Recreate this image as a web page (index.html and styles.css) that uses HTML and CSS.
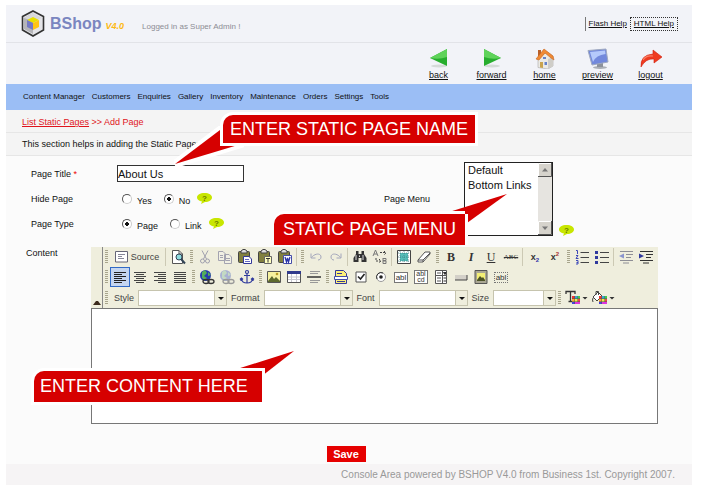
FILE: index.html
```html
<!DOCTYPE html>
<html lang="en">
<head>
<meta charset="utf-8">
<title>BShop - Add Page</title>
<link rel="stylesheet" href="styles.css">
</head>
<body>
<div class="page">
  <header class="masthead">
    <div class="brand">
      <svg class="logo" width="24" height="27" viewBox="0 0 24 27">
        <path d="M12 1 22.500 6.500V20L12 26 1.500 20V6.500Z" fill="#e4e4e8" stroke="#333" stroke-width="1.600"/>
        <path d="M12 3 3 8v11l9 5Z" fill="#b5b5b9"/><path d="M12 3 21 8 12 11 3 8Z" fill="#d8d8dc"/>
        <path d="M12 7 18 10 12 13 6 10Z" fill="#e8e000"/><path d="M6 10 12 13V20L6 17Z" fill="#7479c4"/><path d="M12 13 18 10V17L12 20Z" fill="#ffc414"/>
      </svg>
      <span class="brand-name">BShop</span>
      <span class="version">V4.0</span>
      <span class="login">Logged in as Super Admin !</span>
    </div>
    <div class="help-links"><a href="#">Flash Help</a><a class="focused" href="#">HTML Help</a></div>
  </header>

  <div class="actions">
    <a href="#"><svg width="24" height="22" viewBox="0 0 24 22"><ellipse cx="12" cy="19" rx="8" ry="1.500" fill="#d5dad8"/><path d="M20 2V19L3 11Z" fill="#27ad2e"/><path d="M20 2V10Q12 13 3 11Z" fill="#5fd35a"/></svg>back</a>
    <a href="#"><svg width="24" height="22" viewBox="0 0 24 22"><ellipse cx="12" cy="19" rx="8" ry="1.500" fill="#d5dad8"/><path d="M4 2V19L21 11Z" fill="#27ad2e"/><path d="M4 2V10Q12 13 21 11Z" fill="#5fd35a"/></svg>forward</a>
    <a href="#"><svg width="24" height="22" viewBox="0 0 24 22"><path d="M5 11V20.500L15 22 20 19V9L14 5Z" fill="#eceae4" stroke="#aaa" stroke-width=".6"/><path d="M15 12V22L20 19V10Z" fill="#cfcdc8"/><path d="M5 3H8V8L5 10Z" fill="#b9602a"/><path d="M3 12 11 2 20 9 21 13 18 11 12 6 6 13Z" fill="#f08a35" stroke="#c8641c" stroke-width=".6"/><path d="M7 15H10V21L7 20.500Z" fill="#c9a34e"/><path d="M11.500 15H14V18H11.500ZM10 10H13V12H10Z" fill="#6682c9"/></svg>home</a>
    <a href="#"><svg width="24" height="22" viewBox="0 0 24 22"><ellipse cx="14" cy="20.500" rx="7" ry="1.500" fill="#aaaeb5"/><path d="M11 16H17V20H11Z" fill="#8c919b"/><path d="M2 3.500 20 2 22 15 6 18Z" fill="#7288dc" stroke="#9fa9c0"/><path d="M4 5 19 3.500 19.500 7Q10 8 7 15Z" fill="#b5c9fb"/></svg>preview</a>
    <a href="#"><svg width="24" height="22" viewBox="0 0 24 22"><path d="M2 20Q1 8 14 7V3L23 10 15 16V12Q7 11 2 20Z" fill="#ef3b20" stroke="#cd200f" stroke-width=".6"/><path d="M4 13Q7 8 14 9" fill="none" stroke="#fa8067" stroke-width="1.200"/></svg>logout</a>
  </div>

  <nav class="menu">
    <a href="#">Content Manager</a><a href="#">Customers</a><a href="#">Enquiries</a><a href="#">Gallery</a><a href="#">Inventory</a><a href="#">Maintenance</a><a href="#">Orders</a><a href="#">Settings</a><a href="#">Tools</a>
  </nav>

  <div class="crumbs"><a href="#">List Static Pages</a> &gt;&gt; Add Page</div>
  <div class="intro">This section helps in adding the Static Pages
    <div class="callout callout-name">
      <svg class="tail" width="70" height="40" viewBox="0 0 70 40"><path d="M1 38 46 4 64 19Z" fill="#d60000" stroke="#fff" stroke-width="8" paint-order="stroke"/></svg>
      <span class="callout-text">ENTER STATIC PAGE NAME</span>
    </div>
  </div>

  <form class="form">
    <div class="fields">
      <label class="name" for="title">Page Title <span class="req">*</span></label>
      <div class="value"><input class="title-input" id="title" type="text" value="About Us"></div>

      <span class="name row2">Hide Page</span>
      <div class="value row2">
        <label><input type="radio" name="hide"> <span>Yes</span></label>
        <label><input type="radio" name="hide" checked> <span>No</span></label>
        <svg class="hint" width="15" height="11" viewBox="0 0 15 11"><path d="M7.500 0C12 0 15 2 15 4.500S12 9 8 9L4 11 5 8.500C2 8 0 6.500 0 4.500 0 2 3 0 7.500 0Z" fill="#c8e600"/><text x="5" y="8" class="hint-mark">?</text></svg>
      </div>

      <span class="name row3">Page Type</span>
      <div class="value row3">
        <label><input type="radio" name="type" checked> <span>Page</span></label>
        <label><input type="radio" name="type"> <span>Link</span></label>
        <svg class="hint" width="15" height="11" viewBox="0 0 15 11"><path d="M7.500 0C12 0 15 2 15 4.500S12 9 8 9L4 11 5 8.500C2 8 0 6.500 0 4.500 0 2 3 0 7.500 0Z" fill="#c8e600"/><text x="5" y="8" class="hint-mark">?</text></svg>
      </div>

      <label class="menu-name" for="pagemenu">Page Menu</label>
      <div class="menu-value">
        <div class="listbox">
          <select id="pagemenu" size="4"><option>Default</option><option>Bottom Links</option></select>
          <div class="scrollbar">
            <svg width="14" height="14" viewBox="0 0 14 14"><path d="M.5 13.500V.5H13.500" fill="none" stroke="#fff"/><path d="M13.500 0V13.500H0" fill="none" stroke="#555"/><path d="M4 8.500 7 5 10 8.500Z" fill="#777"/></svg>
            <svg width="14" height="14" viewBox="0 0 14 14"><path d="M.5 13.500V.5H13.500" fill="none" stroke="#fff"/><path d="M13.500 0V13.500H0" fill="none" stroke="#555"/><path d="M4 5.500 7 9 10 5.500Z" fill="#777"/></svg>
          </div>
        </div>
        <svg class="hint" width="15" height="11" viewBox="0 0 15 11"><path d="M7.500 0C12 0 15 2 15 4.500S12 9 8 9L4 11 5 8.500C2 8 0 6.500 0 4.500 0 2 3 0 7.500 0Z" fill="#c8e600"/><text x="5" y="8" class="hint-mark">?</text></svg>
        <div class="callout callout-menu">
          <svg class="tail" width="64" height="34" viewBox="0 0 64 34"><path d="M60 3 2 21 20 32Z" fill="#d60000"/></svg>
          <span class="callout-text">STATIC PAGE MENU</span>
        </div>
      </div>
    </div>

    <div class="content-row">
      <label class="content-name" for="body">Content</label>
      <div class="editor">
        <div class="toolbar">
          <button type="button" class="collapse" aria-label="Collapse toolbar"><svg width="8" height="4" viewBox="0 0 8 4"><path d="M0 4 3 0H5L8 4Z" fill="#3c2a1c"/></svg></button>
          <div class="tool-rows">
            <div class="tools">
              <i class="grip"></i>
              <button type="button" class="source"><svg width="13" height="12" viewBox="0 0 13 12"><path d="M.5.5H12.500V11H.5Z" fill="#fff" stroke="#667"/><path d="M3 3.500H10M3 5.500H7M3 7.500H9" stroke="#889"/></svg>Source</button>
              <i class="sep"></i>
              <button type="button" aria-label="Preview"><svg viewBox="0 0 16 16"><path d="M2.500 1.500H9L12.500 5V14.500H2.500Z" fill="#fff" stroke="#555"/><path d="M9 1.500V5H12.500" fill="none" stroke="#555"/><circle cx="9" cy="8" r="3" fill="#8fdce0" stroke="#345"/><path d="M11 10 15 14.500" stroke="#345" stroke-width="2"/></svg></button>
              <i class="grip"></i>
              <button type="button" aria-label="Cut"><svg viewBox="0 0 16 16" fill="none" stroke="#a0a0ae"><path d="M5 1.500 9.500 10M11 1.500 6.500 10"/><circle cx="5.500" cy="12" r="2"/><circle cx="10.500" cy="12" r="2"/></svg></button>
              <button type="button" aria-label="Copy"><svg viewBox="0 0 16 16" fill="#f1f0e4" stroke="#a3a3b0"><path d="M1.500 2.500H6L8.500 5V11.500H1.500ZM7.500 5.500H12L14.500 8V14.500H7.500ZM9 9.500H13M9 11.500H13M3 6.500H6M3 8.500H6"/></svg></button>
              <button type="button" aria-label="Paste"><svg viewBox="0 0 16 16"><rect x="1.500" y="2.500" width="11" height="11" rx="1" fill="#81803f" stroke="#444"/><path d="M4 4V2L6 .5H8L10 2V4Z" fill="#ddd" stroke="#444"/><path d="M6.500 7.500H12L14.500 10V14.500H6.500Z" fill="#fff" stroke="#33389b"/><path d="M8 10.500H12M8 12.500H13" stroke="#6268c4"/></svg></button>
              <button type="button" aria-label="Paste as text"><svg viewBox="0 0 16 16"><rect x="1.500" y="2.500" width="11" height="11" rx="1" fill="#81803f" stroke="#444"/><path d="M4 4V2L6 .5H8L10 2V4Z" fill="#ddd" stroke="#444"/><path d="M7.500 7.500H14.500V14.500H7.500Z" fill="#ffffbf" stroke="#666"/><path d="M9 9.500H13M11 9V13.500" stroke="#333"/></svg></button>
              <button type="button" aria-label="Paste from Word"><svg viewBox="0 0 16 16"><rect x="1.500" y="2.500" width="11" height="11" rx="1" fill="#81803f" stroke="#444"/><path d="M4 4V2L6 .5H8L10 2V4Z" fill="#ddd" stroke="#444"/><path d="M6.500 6.500H14.500V14.500H6.500Z" fill="#fff" stroke="#444da8"/><path d="M8 8 9.500 13 10.500 9 11.500 13 13 8" fill="none" stroke="#2b35a8" stroke-width="1.300"/></svg></button>
              <i class="sep"></i><i class="grip"></i>
              <button type="button" aria-label="Undo"><svg viewBox="0 0 16 16" fill="none" stroke="#a3a6bb"><path d="M3 4.500V9H7.500M3.500 8.500C7 4 13 4 13 8 13 10 11.500 11 10 11"/></svg></button>
              <button type="button" aria-label="Redo"><svg viewBox="0 0 16 16" fill="none" stroke="#a3a6bb"><path d="M13 4.500V9H8.500M12.500 8.500C9 4 3 4 3 8 3 10 4.500 11 6 11"/></svg></button>
              <i class="sep"></i>
              <button type="button" aria-label="Find"><svg viewBox="0 0 16 16" fill="#333"><path d="M4 2H6.500V5H9.500V2H12V5L14.500 9V13H9.500V9H6.500V13H1.500V9L4 5Z"/><path d="M4 6V11M11 6V11M7.500 6.500V8" stroke="#ddd"/></svg></button>
              <button type="button" aria-label="Replace"><svg viewBox="0 0 16 16" fill="none" stroke="#777"><path d="M1 7 3.500 1 6 7M2 5H5M11 9V14.500M11 9.500H14V11.500H11M11 12H14V14.500H11"/><path d="M8 3.500H13M12 2 14 4 12 6M4 9V12H8M7 10 9 12 7 14" stroke="#444" stroke-dasharray="2 1"/></svg></button>
              <i class="sep"></i>
              <button type="button" aria-label="Select all"><svg viewBox="0 0 16 16"><path d="M1.500 1.500H14.500V14.500H1.500Z" fill="#fff" stroke="#444"/><path d="M4 4H12V12H4Z" fill="#55bdb8"/><path d="M4 2V14M8 2V14M12 2V14M2 4H14M2 8H14M2 12H14" stroke="#387b80" stroke-width=".7" stroke-dasharray="1 1"/></svg></button>
              <button type="button" aria-label="Remove format"><svg viewBox="0 0 16 16"><path d="M2 11 9 3H14V5L7 13H2Z" fill="#fff" stroke="#555"/><path d="M2 11H7L14 4M7 11V13" fill="none" stroke="#555"/></svg></button>
              <i class="grip"></i>
              <button type="button" class="glyph bold">B</button>
              <button type="button" class="glyph italic">I</button>
              <button type="button" class="glyph under">U</button>
              <button type="button" class="glyph strike">ABC</button>
              <i class="sep"></i>
              <button type="button" class="glyph script">x<sub>2</sub></button>
              <button type="button" class="glyph script">x<sup>2</sup></button>
              <i class="grip"></i>
              <button type="button" aria-label="Numbered list"><svg viewBox="0 0 16 16" fill="none"><path d="M6.500 3.500H15M6.500 8.500H15M6.500 13.500H15" stroke="#444"/><path d="M2 1.500H3.500V5M2 6.500H4L2 9.500H4.500M2 11.500H4V15H2M2.500 13.500H4" stroke="#3d48b8"/></svg></button>
              <button type="button" aria-label="Bulleted list"><svg viewBox="0 0 16 16"><path d="M6 3.500H15M6 8.500H15M6 13.500H15" stroke="#444"/><path d="M1 2H4V5H1ZM1 7H4V10H1ZM1 12H4V15H1Z" fill="#303a9d"/></svg></button>
              <i class="sep"></i>
              <button type="button" aria-label="Outdent"><svg viewBox="0 0 16 16"><path d="M2 2.500H15M8 5.500H15M8 8.500H13M2 11.500H15M5 14H11" stroke="#8e8e95"/><path d="M6 4.500V9.500L1 7Z" fill="#8b95ce"/></svg></button>
              <button type="button" aria-label="Indent"><svg viewBox="0 0 16 16"><path d="M2 2.500H15M8 5.500H15M8 8.500H13M2 11.500H15M5 14H11" stroke="#333"/><path d="M1 4.500V9.500L6 7Z" fill="#303a9d"/></svg></button>
            </div>
            <div class="tools">
              <i class="grip"></i>
              <button type="button" class="pressed" aria-label="Align left"><svg viewBox="0 0 16 16"><path d="M2 3.500H14M2 5.500H10M2 7.500H14M2 9.500H10M2 11.500H14M2 13.500H10" stroke="#222"/></svg></button>
              <button type="button" aria-label="Align center"><svg viewBox="0 0 16 16"><path d="M2 3.500H14M4 5.500H12M2 7.500H14M4 9.500H12M2 11.500H14M4 13.500H12" stroke="#444"/></svg></button>
              <button type="button" aria-label="Align right"><svg viewBox="0 0 16 16"><path d="M2 3.500H14M6 5.500H14M2 7.500H14M6 9.500H14M2 11.500H14M6 13.500H14" stroke="#444"/></svg></button>
              <button type="button" aria-label="Justify"><svg viewBox="0 0 16 16"><path d="M2 3.500H14M2 5.500H14M2 7.500H14M2 9.500H14M2 11.500H14M2 13.500H14" stroke="#444"/></svg></button>
              <i class="grip"></i>
              <button type="button" aria-label="Link"><svg viewBox="0 0 16 16"><circle cx="6.500" cy="6.500" r="5.500" fill="#263cae"/><path d="M3 3 6 1 8 4 5 7 8 9 6 11 3 9ZM9 3 12 6 9 7Z" fill="#54ad5a"/><g fill="none" stroke="#333" stroke-width="1.300"><ellipse cx="7" cy="12.500" rx="3" ry="2"/><ellipse cx="12" cy="12.500" rx="3" ry="2"/></g></svg></button>
              <button type="button" aria-label="Unlink"><svg viewBox="0 0 16 16"><circle cx="6.500" cy="6.500" r="5.500" fill="#a9b1d2"/><path d="M3 3 6 1 8 4 5 7 8 9 6 11 3 9ZM9 3 12 6 9 7Z" fill="#c3d9c3"/><g fill="none" stroke="#999" stroke-width="1.300"><ellipse cx="7" cy="12.500" rx="3" ry="2"/><ellipse cx="12" cy="12.500" rx="3" ry="2"/></g></svg></button>
              <button type="button" aria-label="Anchor"><svg viewBox="0 0 16 16" fill="none" stroke="#303a9d" stroke-width="1.200"><circle cx="8" cy="3" r="1.500"/><path d="M8 4.500V14M5 6.500H11M2 12V9M1 10.500 2.500 9 4 10.500M14 12V9M12 10.500 13.500 9 15 10.500M2.500 10C3 13 6 14 8 14S13 13 13.500 10"/></svg></button>
              <i class="grip"></i>
              <button type="button" aria-label="Image"><svg viewBox="0 0 16 16"><path d="M1.500 2.500H14.500V13.500H1.500Z" fill="#f5f19f" stroke="#555"/><path d="M2 12 6 7 8 10 10 8 14 12V13H2Z" fill="#5d6a2e"/><circle cx="11" cy="5" r="1.300" fill="#b79a20"/></svg></button>
              <button type="button" aria-label="Table"><svg viewBox="0 0 16 16"><path d="M1.500 2.500H14.500V13.500H1.500Z" fill="#fff" stroke="#555"/><path d="M1 2H15V5H1Z" fill="#303a8d"/><path d="M5.500 5V13M10.500 5V13M2 8H14M2 10.500H14" stroke="#c8c8d0"/></svg></button>
              <button type="button" aria-label="Rule"><svg viewBox="0 0 16 16"><path d="M4 2.500H14M4 4.500H12M4 11.500H14M4 13.500H12" stroke="#999"/><path d="M1 8H15" stroke="#333" stroke-width="1.500"/></svg></button>
              <i class="grip"></i>
              <button type="button" aria-label="Form"><svg viewBox="0 0 16 16"><path d="M2.500 1.500H10.500L13.500 4.500V14.500H2.500Z" fill="#fdf07a" stroke="#33389b"/><path d="M4 4H9V5H4ZM4 12H12V13H4Z" fill="#33389b"/><path d="M1.500 7.500H14.500V10.500H1.500Z" fill="#fff" stroke="#444da8"/></svg></button>
              <button type="button" aria-label="Checkbox"><svg viewBox="0 0 16 16"><path d="M3 3H13V13H3Z" fill="#fff" stroke="#555"/><path d="M5 7.500 7.500 10 11.500 5" fill="none" stroke="#222" stroke-width="1.600"/></svg></button>
              <button type="button" aria-label="Radio"><svg viewBox="0 0 16 16"><circle cx="8" cy="8" r="4.500" fill="#fff" stroke="#999"/><path d="M4 10A4.500 4.500 0 0 1 10 4" fill="none" stroke="#333"/><circle cx="8" cy="8" r="1.800" fill="#222"/></svg></button>
              <button type="button" class="glyph"><span class="field-icon">abl</span></button>
              <button type="button" class="glyph"><span class="field-icon area">abl<br>cd</span></button>
              <button type="button" aria-label="Selection field"><svg viewBox="0 0 16 16"><path d="M2.500 1.500H13.500V6.500H2.500ZM2.500 6.500H13.500V14.500H2.500Z" fill="#fff" stroke="#555"/><path d="M9.500 2V14M4 4H8M4 9H8M4 12H8" stroke="#555"/><path d="M10.500 3.500H13L12 5.500ZM10.500 9H13M10.500 12H13" stroke="#333"/></svg></button>
              <button type="button" aria-label="Button"><svg viewBox="0 0 16 16"><path d="M2 6H14V11H2Z" fill="#d3d0c8"/><path d="M2 11H14V6" fill="none" stroke="#444"/></svg></button>
              <button type="button" aria-label="Image button"><svg viewBox="0 0 16 16"><path d="M2 1.500H14V14.500H2Z" fill="#aaa793" stroke="#555"/><path d="M4 4H12V12H4Z" fill="#f3ef75"/><path d="M4 11 7 7 9 9 10 8 12 11V12H4Z" fill="#4c5325"/></svg></button>
              <button type="button" class="glyph"><span class="field-icon hidden-field">abl</span></button>
            </div>
            <div class="tools combos">
              <i class="grip"></i>
              <label for="f-style">Style</label><span class="combo"><select id="f-style"><option></option></select></span>
              <label for="f-format">Format</label><span class="combo"><select id="f-format"><option></option></select></span>
              <label for="f-font">Font</label><span class="combo"><select id="f-font"><option></option></select></span>
              <label for="f-size">Size</label><span class="combo short"><select id="f-size"><option></option></select></span>
              <i class="grip"></i>
              <button type="button" class="color" aria-label="Text color"><svg width="24" height="16" viewBox="0 0 24 16"><path d="M1 4V1.500H10V4M5.500 2V11M3.500 11.500H7.500" fill="none" stroke="#333" stroke-width="1.300"/><path d="M7 6H15V14H7Z" fill="#555"/><path d="M7 6H9.500V8.500H7Z" fill="#e33"/><path d="M10 6H12.500V8.500H10Z" fill="#3ac"/><path d="M13 6H15V8.500H13Z" fill="#4c4"/><path d="M7 9H9.500V11.500H7Z" fill="#fa3"/><path d="M10 9H12.500V11.500H10Z" fill="#ee4"/><path d="M13 9H15V11.500H13Z" fill="#e44"/><path d="M7 12H9.500V14H7Z" fill="#44d"/><path d="M10 12H15V14H10Z" fill="#d3d"/><path d="M17.500 7H22.500L20 9.500Z" fill="#333"/></svg></button>
              <button type="button" class="color" aria-label="Background color"><svg width="24" height="16" viewBox="0 0 24 16"><path d="M1 7 6 2 10 6 5 11Z" fill="#fff" stroke="#444"/><path d="M4 5V1.500H6.500V5M1 8Q0 10 1 12" fill="none" stroke="#444"/><path d="M7 6H15V14H7Z" fill="#555"/><path d="M7 6H9.500V8.500H7Z" fill="#e33"/><path d="M10 6H12.500V8.500H10Z" fill="#3ac"/><path d="M13 6H15V8.500H13Z" fill="#4c4"/><path d="M7 9H9.500V11.500H7Z" fill="#fa3"/><path d="M10 9H12.500V11.500H10Z" fill="#ee4"/><path d="M13 9H15V11.500H13Z" fill="#e44"/><path d="M7 12H9.500V14H7Z" fill="#44d"/><path d="M10 12H15V14H10Z" fill="#d3d"/><path d="M17.500 7H22.500L20 9.500Z" fill="#333"/></svg></button>
            </div>
          </div>
        </div>
        <textarea id="body" class="canvas"></textarea>
        <div class="callout callout-content">
          <svg class="tail" width="64" height="34" viewBox="0 0 64 34"><path d="M60 3 3 21 28 28Z" fill="#d60000"/></svg>
          <span class="callout-text">ENTER CONTENT HERE</span>
        </div>
      </div>
    </div>

    <div class="submit"><button type="submit">Save</button></div>
  </form>

  <footer class="footer">Console Area powered by BSHOP V4.0 from Business 1st. Copyright 2007.</footer>
</div>
</body>
</html>
```
FILE: styles.css
```css
* { box-sizing: border-box; }
body { margin: 0; background: #fff; color: #111; font: 9px/12px "Liberation Sans", Arial, sans-serif; }
a { color: inherit; }
svg { display: block; flex: none; }
button, input, select, textarea { font: inherit; color: inherit; margin: 0; padding: 0; border: 0; border-radius: 0; background: none; }
.page { margin: 5px 10px 0 6px; }

.masthead { display: flex; justify-content: space-between; align-items: center; height: 38px; padding: 0 14px 0 15px; background: #f2f3f8; border-bottom: 1px solid #e2e3e8; }
.brand { display: flex; align-items: center; }
.brand-name { margin: 0 4px 0 5px; color: #7b86c0; font-size: 16px; font-weight: bold; line-height: 20px; }
.version { color: #fdb913; font: italic bold 9px/14px "Liberation Sans", Arial, sans-serif; padding-top: 4px; }
.login { margin-left: 18px; padding-top: 6px; color: #8c8c94; font-size: 8px; }
.help-links { display: flex; align-items: center; font-size: 8px; border-left: 1px solid #777; padding-left: 3px; }
.help-links a { line-height: 12px; }
.help-links .focused { margin-left: 3px; padding: 0 3px; border: 1px dotted #333; }

.actions { display: flex; justify-content: flex-end; height: 41px; padding: 4px 15px 0 0; background: #f2f3f8; }
.actions a { display: flex; flex-direction: column; align-items: center; width: 53px; line-height: 13px; }

.menu { display: flex; align-items: center; gap: 7px; height: 26px; padding-left: 17px; background: #9bbef5; font-size: 8px; }
.menu a { text-decoration: none; }
.crumbs { height: 23px; padding: 6px 16px; background: #f4f4f4; border-bottom: 1px solid #e6e6e6; color: #e0141c; }
.intro { position: relative; height: 23px; padding: 5px 16px; background: #f4f4f4; border-bottom: 1px solid #e6e6e6; }

.form { padding: 5px 34px 2px 20px; background: #fbfbfb; }
.fields { display: grid; grid-template-columns: 86px minmax(0, 267px) 80px 1fr; grid-template-rows: 25px 25px 25px; padding-left: 5px; height: 86px; }
.name { grid-column: 1; align-self: center; }
.value { grid-column: 2; display: flex; align-items: center; }
.req { color: #e00; }
.title-input { width: 127px; height: 17px; border: 1px solid #333; background: #fff; font-size: 11px; }
.value label { display: flex; align-items: center; gap: 5px; margin-right: 7px; }
.value label span { padding-top: 4px; }
.value input[type="radio"] { appearance: none; width: 10px; height: 10px; margin-left: 5px; border: 1px solid; border-color: #555 #ccc #ccc #555; border-radius: 50%; background: #fff; }
.value label + label input { margin-left: 0; }
.value input[type="radio"]:checked { background: radial-gradient(circle, #111 0 2px, #fff 2px); }
.hint-mark { font: bold 8px "Liberation Sans", sans-serif; fill: #697a00; }
.menu-name { grid-column: 3; grid-row: 2; align-self: center; }
.menu-value { grid-column: 4; grid-row: 1 / 4; display: flex; align-items: flex-end; gap: 6px; position: relative; align-self: start; padding-top: 1px; }
.listbox { display: flex; width: 89px; height: 74px; border: 1px solid #222; background: #fff; }
.listbox select { flex: 1; min-width: 0; padding: 1px 3px; overflow: hidden; appearance: none; font-size: 11px; outline: 0; }
.listbox option { min-height: 15px; padding: 0; line-height: 15px; }
.scrollbar { display: flex; flex-direction: column; justify-content: space-between; background: #e6e4e0; }
.scrollbar svg { background: #d6d3cc; }

.content-row { display: flex; }
.content-name { width: 65px; flex: none; }
.editor { position: relative; flex: 1; min-width: 0; }
.toolbar { display: flex; background: #efeedd; }
.collapse { width: 12px; flex: none; display: flex; align-items: flex-end; justify-content: center; padding-bottom: 3px; border-right: 1px solid #888; }
.tool-rows { flex: 1; min-width: 0; }
.tools { display: flex; align-items: center; height: 20px; }
.tools button { display: flex; align-items: center; justify-content: center; width: 20px; height: 20px; flex: none; }
.tools button > svg:not([width]) { width: 16px; height: 16px; }
.tools .source { width: 54px; gap: 3px; color: #444; }
.grip { flex: none; width: 3px; height: 14px; margin: 0 2px; background: repeating-linear-gradient(#a8a58c 0 1px, transparent 1px 2px); }
.sep { flex: none; width: 1px; height: 18px; margin: 0 2px 0 1px; background: #ccc9b4; }
.tools .pressed { background: #c5d6f0; border: 1px solid #316ac5; }
.tools .glyph { font: 12px/14px "Liberation Serif", serif; color: #333; }
.tools .bold { font-weight: bold; }
.tools .italic { font-style: italic; font-weight: bold; }
.tools .under { text-decoration: underline; }
.tools .strike { font-size: 7px; text-decoration: line-through; }
.tools .script { font: bold 9px/12px "Liberation Sans", sans-serif; }
.script sub, .script sup { font-size: 6px; line-height: 6px; vertical-align: baseline; }
.script sub { color: #33a; padding-top: 6px; }
.script sup { color: #a33; padding-bottom: 6px; }
.field-icon { border: 1px solid #777; background: #fff; font: 8px/9px "Liberation Sans", sans-serif; padding: 0 1px; }
.field-icon.area { font-size: 7px; line-height: 6px; }
.field-icon.hidden-field { border-style: dotted; background: none; }
.tools.combos { height: 21px; color: #444; }
.combos label { margin: 0 4px; }
.combo { position: relative; width: 89px; height: 16px; flex: none; }
.combo.short { width: 63px; }
.combo select { appearance: none; display: block; width: 100%; height: 100%; border: 1px solid #c6c4ae; background: linear-gradient(to left, #efeedd 11px, #c6c4ae 11px 12px, #fff 12px); }
.combo::after { content: ""; position: absolute; right: 3px; top: 7px; border: 3px solid transparent; border-top-color: #111; border-bottom: 0; }
.tools .color { width: 27px; }
.canvas { display: block; width: 100%; height: 116px; border: 1px solid #777; background: #fff; resize: none; outline: 0; }

.submit { display: flex; justify-content: center; padding: 22px 0 0 8px; }
.submit button { width: 39px; height: 16px; background: #e60000; color: #fff; font-size: 11px; font-weight: bold; }
.footer { height: 21px; padding: 5px 17px; background: #f6f4f5; color: #999; font-size: 10px; text-align: right; }

.callout { position: absolute; z-index: 2; white-space: nowrap; color: #fff; font-size: 18px; line-height: 31px; }
.callout-text { position: relative; display: block; padding: 0 7px; background: #d60000; border-radius: 10px 0 0 0; box-shadow: 0 0 0 3px #fff; }
.tail { position: absolute; }
.callout-name { left: 217px; top: -18px; line-height: 28px; }
.callout-name .tail { left: -49px; top: 11px; }
.callout-menu { right: calc(100% - 1px); top: 53px; }
.callout-menu .callout-text { padding: 0 9px; box-shadow: 0 -3px 0 #fff, 3px 0 0 #fff; }
.callout-menu .tail { right: -46px; top: -23px; }
.callout-content { left: -57px; top: 124px; }
.callout-content .callout-text { padding: 0 14px 0 6px; }
.callout-content .tail { right: -36px; top: -23px; }
```
